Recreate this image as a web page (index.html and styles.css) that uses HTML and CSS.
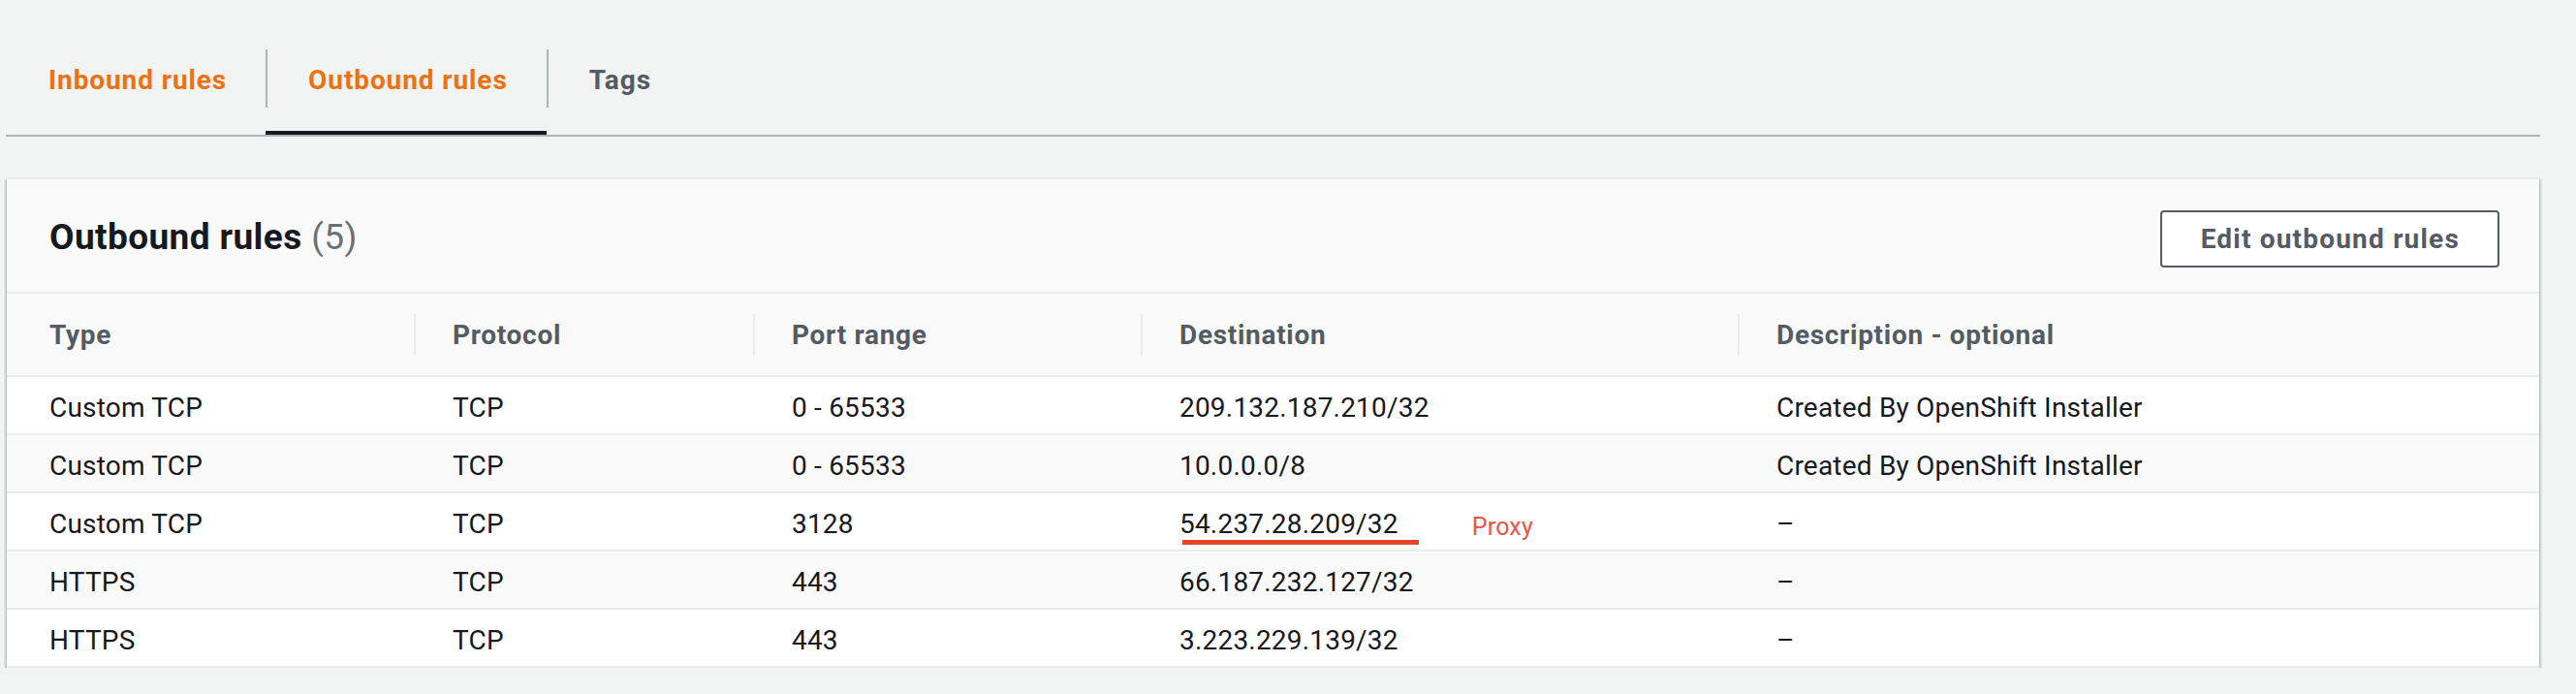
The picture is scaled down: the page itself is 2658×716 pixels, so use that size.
FILE: index.html
```html
<!DOCTYPE html>
<html lang="en">
<head>
<meta charset="utf-8">
<title>Outbound rules</title>
<link rel="stylesheet" href="styles.css">
</head>
<body>
<div class="page">
  <div class="tabs">
    <div class="tab"><span class="tab-label link">Inbound rules</span></div>
    <div class="tab active"><span class="tab-label link sep">Outbound rules</span></div>
    <div class="tab"><span class="tab-label sep">Tags</span></div>
  </div>

  <section class="card">
    <header class="card-header">
      <h2 class="title">Outbound rules <span class="count">(5)</span></h2>
      <button class="btn">Edit outbound rules</button>
    </header>
    <div class="table">
      <div class="row head">
        <div class="cell first"><span class="hlabel">Type</span></div>
        <div class="cell"><span class="hlabel sep">Protocol</span></div>
        <div class="cell"><span class="hlabel sep">Port range</span></div>
        <div class="cell"><span class="hlabel sep">Destination</span></div>
        <div class="cell"><span class="hlabel sep">Description - optional</span></div>
      </div>
      <div class="row">
        <div class="cell first">Custom TCP</div>
        <div class="cell">TCP</div>
        <div class="cell">0 - 65533</div>
        <div class="cell">209.132.187.210/32</div>
        <div class="cell">Created By OpenShift Installer</div>
      </div>
      <div class="row alt">
        <div class="cell first">Custom TCP</div>
        <div class="cell">TCP</div>
        <div class="cell">0 - 65533</div>
        <div class="cell">10.0.0.0/8</div>
        <div class="cell">Created By OpenShift Installer</div>
      </div>
      <div class="row">
        <div class="cell first">Custom TCP</div>
        <div class="cell">TCP</div>
        <div class="cell">3128</div>
        <div class="cell"><span class="marked">54.237.28.209/32</span><span class="note">Proxy</span></div>
        <div class="cell">–</div>
      </div>
      <div class="row alt">
        <div class="cell first">HTTPS</div>
        <div class="cell">TCP</div>
        <div class="cell">443</div>
        <div class="cell">66.187.232.127/32</div>
        <div class="cell">–</div>
      </div>
      <div class="row last">
        <div class="cell first">HTTPS</div>
        <div class="cell">TCP</div>
        <div class="cell">443</div>
        <div class="cell">3.223.229.139/32</div>
        <div class="cell">–</div>
      </div>
    </div>
  </section>
</div>
</body>
</html>
```
FILE: styles.css
```css
* { box-sizing: border-box; }

html, body {
  margin: 0;
  padding: 0;
  background: #f2f3f3;
  font-family: Roboto, "Liberation Sans", sans-serif;
  color: #16191f;
}

.page {
  width: 2621px;
  padding-left: 6px;
}

/* Tabs */
.tabs {
  display: flex;
  padding-top: 51px;
  border-bottom: 2px solid #aab7b8;
}

.tab {
  padding-bottom: 24px;
  border-bottom: 4px solid transparent;
}

.tab.active {
  border-bottom-color: #16191f;
}

.tab-label {
  display: flex;
  align-items: center;
  height: 60px;
  padding: 2px 40px 0 42px;
  font-size: 28px;
  font-weight: 700;
  letter-spacing: 0.9px;
  color: #545b64;
  white-space: nowrap;
}

.tab:first-child .tab-label { padding-left: 44px; }

.tab-label.link { color: #ec7211; }

.tab-label.sep { border-left: 2px solid #aab7b8; }

/* Card */
.card {
  margin: 42px 1px 0 1px;
  background: #fafafa;
  border-top: 2px solid #eaeded;
  box-shadow: 0 2px 2px 0 rgba(0, 28, 36, 0.3),
              2px 2px 2px 0 rgba(0, 28, 36, 0.15),
              -2px 2px 2px 0 rgba(0, 28, 36, 0.15);
}

.card-header {
  display: flex;
  align-items: center;
  justify-content: space-between;
  height: 118px;
  padding: 0 41px 0 44px;
  border-bottom: 2px solid #eaeded;
}

.title {
  margin: 0;
  padding-top: 2px;
  font-size: 37px;
  font-weight: 700;
  letter-spacing: 0.4px;
  color: #16191f;
}

.count {
  font-weight: 400;
  color: #687078;
}

.btn {
  height: 59px;
  padding: 0 39px 0 40px;
  margin-top: 6px;
  background: #ffffff;
  border: 2px solid #545b64;
  border-radius: 4px;
  font-family: inherit;
  font-size: 28px;
  font-weight: 700;
  letter-spacing: 1.2px;
  color: #545b64;
}

/* Table */
.row {
  display: grid;
  grid-template-columns: 420px 350px 400px 616px 1fr;
  height: 60px;
  border-top: 2px solid #eaeded;
  background: #ffffff;
  font-size: 28px;
  letter-spacing: 0.2px;
}

.row.alt { background: #fafafa; }

.row.last {
  height: 62px;
  border-bottom: 2px solid #eaeded;
}

.row.head {
  height: 84px;
  border-top: none;
  background: #fafafa;
}

.cell {
  display: flex;
  align-items: center;
  padding: 5px 0 0 40px;
  white-space: nowrap;
}

.cell.first { padding-left: 44px; }

.head .cell {
  padding: 0;
}

.head .cell.first { padding-left: 44px; }

.hlabel {
  display: flex;
  align-items: center;
  height: 43px;
  font-weight: 700;
  letter-spacing: 0.7px;
  color: #545b64;
}

.hlabel.sep {
  border-left: 2px solid #eaeded;
  padding-left: 38px;
}

.marked {
  position: relative;
  display: inline-block;
}

.marked::after {
  content: "";
  position: absolute;
  left: 3px;
  right: -21px;
  top: 100%;
  height: 5px;
  background: #e5432b;
}

.note {
  margin-left: 76px;
  font-size: 25px;
  color: #e9574b;
  position: relative;
  top: 3px;
}
```
